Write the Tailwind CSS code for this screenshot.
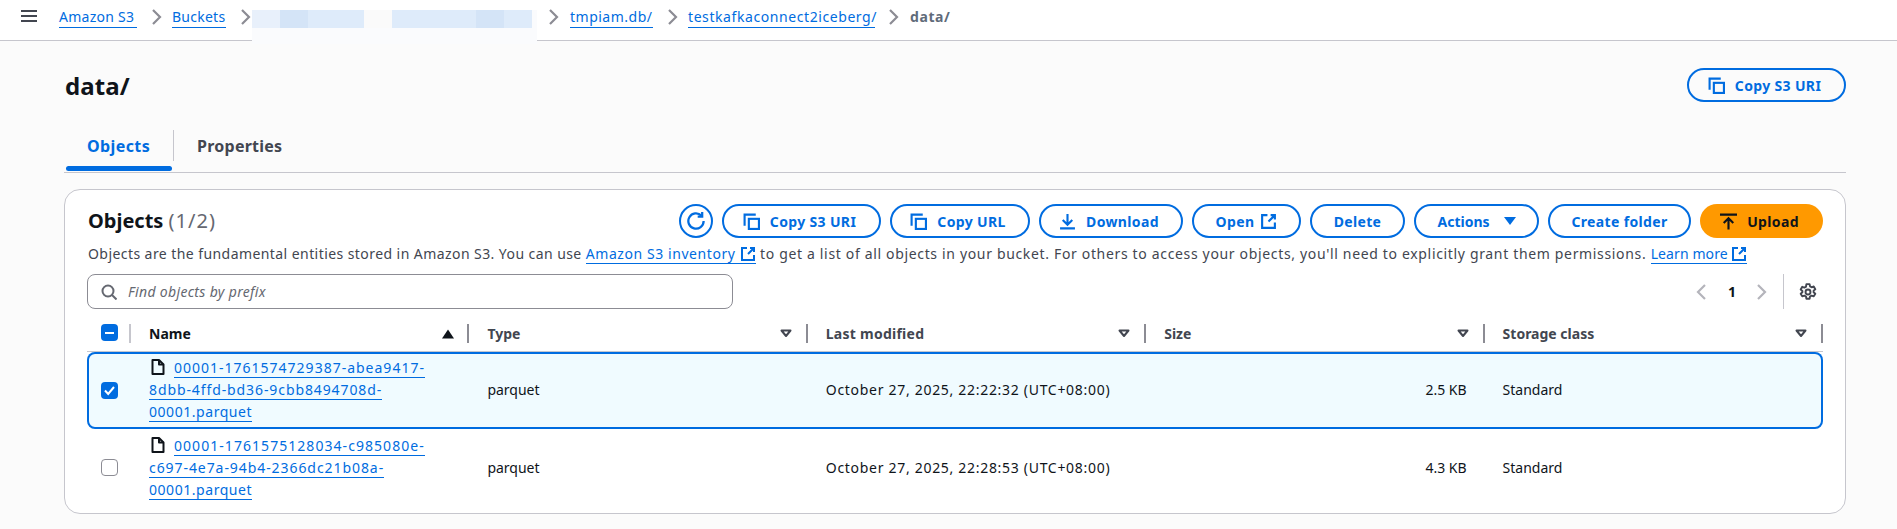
<!DOCTYPE html>
<html lang="en">
<head>
<meta charset="utf-8">
<script src="https://cdn.jsdelivr.net/npm/@tailwindcss/browser@4"></script>
</head>
<body class="bg-[#fbfbfb] font-['Noto_Sans',sans-serif] text-[14px] text-[#0f141a] relative h-[529px] overflow-hidden">
<svg width="0" height="0" class="absolute">
  <defs>
    <g id="copy" fill="none" stroke="currentColor" stroke-width="2"><path d="M1.500 12V1.500H12"/><rect x="5.500" y="5.500" width="9.500" height="9.500"/></g>
    <g id="ext" fill="none" stroke="currentColor" stroke-width="2"><path d="M7 2H2v12h12V9"/><path d="M10 2h4v4M14 2 8 8"/></g>
    <g id="filter" fill="none" stroke="currentColor" stroke-width="2" stroke-linejoin="round"><path d="M3.500 4.500h9L8 10z"/></g>
    <g id="file" fill="none" stroke="currentColor" stroke-width="2" stroke-linejoin="round"><path d="M9 1H2.500v14h11V5.500z"/><path d="M9 1v4.500h4.500"/></g>
    <g id="chev" fill="none" stroke="currentColor" stroke-width="2.200"><path d="M5 1 12 8 5 15"/></g>
  </defs>
</svg>

<!-- top breadcrumb bar -->
<header class="h-[41px] bg-white border-b border-[#c6c6cd] flex items-start pt-[7px] pl-[21px] text-[#006ce0] relative">
  <svg class="w-[16px] h-[14px] mt-[2px] text-[#424650]" viewBox="0 0 16 14" fill="none" stroke="currentColor" stroke-width="2"><path d="M0 2h16M0 7h16M0 12h16"/></svg>
  <a class="ml-[22px] w-[78px] h-[21px] leading-[19px] whitespace-nowrap border-b border-[#006ce0] tracking-[0.25px]">Amazon S3</a>
  <svg class="ml-[13px] mt-[2px] w-[14px] h-[16px] text-[#8c8c94]" viewBox="2 0 14 16"><use href="#chev"/></svg>
  <a class="ml-[8px] w-[54px] h-[21px] leading-[19px] whitespace-nowrap border-b border-[#006ce0] tracking-[0.25px]">Buckets</a>
  <svg class="ml-[13px] mt-[2px] w-[14px] h-[16px] text-[#8c8c94]" viewBox="2 0 14 16"><use href="#chev"/></svg>
  <div class="w-[295px] shrink-0"></div>
  <svg class="ml-[-1px] mt-[2px] w-[14px] h-[16px] text-[#8c8c94]" viewBox="2 0 14 16"><use href="#chev"/></svg>
  <a class="ml-[9px] w-[83px] h-[21px] leading-[19px] whitespace-nowrap border-b border-[#006ce0] tracking-[0.5px]">tmpiam.db/</a>
  <svg class="ml-[13px] mt-[2px] w-[14px] h-[16px] text-[#8c8c94]" viewBox="2 0 14 16"><use href="#chev"/></svg>
  <a class="ml-[8px] w-[187px] h-[21px] leading-[19px] whitespace-nowrap border-b border-[#006ce0] tracking-[0.58px]">testkafkaconnect2iceberg/</a>
  <svg class="ml-[12px] mt-[2px] w-[14px] h-[16px] text-[#8c8c94]" viewBox="2 0 14 16"><use href="#chev"/></svg>
  <span class="ml-[9px] font-bold leading-[19px] text-[#5f6b7a] tracking-[0.6px]">data/</span>
</header>

<!-- redaction patch lying over the bar and its border -->
<div class="absolute left-[252px] top-[10px] w-[285px] h-[34px] flex flex-col">
  <div class="h-[18px] flex">
    <div class="w-[28px] bg-[#e8f0fb]"></div><div class="w-[28px] bg-[#d4e4f7]"></div><div class="w-[56px] bg-[#deebfa]"></div><div class="w-[28px] bg-[#fafafa]"></div><div class="w-[84px] bg-[#deebfa]"></div><div class="w-[28px] bg-[#d4e4f7]"></div><div class="w-[28px] bg-[#deebfa]"></div><div class="w-[5px] bg-[#fafbfd]"></div>
  </div>
  <div class="h-[16px] bg-[#fafbfd]"></div>
</div>

<main class="pl-[64px] pr-[51px]">
  <!-- page heading -->
  <div class="h-[61px] flex items-start justify-between">
    <h1 class="mt-[23px] ml-[1px] text-[24px] leading-[44px] font-bold tracking-[0.1px]">data/</h1>
    <button class="mt-[27px] w-[159px] h-[34px] rounded-[20px] border-2 border-[#006ce0] text-[#006ce0] font-bold tracking-[0.35px] flex items-center justify-center gap-[10px] pr-[4px]">
      <svg class="w-[17px] h-[17px]" viewBox="0 0 16 16"><use href="#copy"/></svg>Copy S3 URI
    </button>
  </div>

  <!-- tabs -->
  <div class="mt-[28px] h-[43px] border-b border-[#c6c6cd] flex items-start pl-[2px] relative">
    <div class="w-[107px] h-[41px] flex flex-col">
      <span class="pl-[21px] h-[36px] text-[16px] leading-[32px] font-bold text-[#006ce0] tracking-[0.4px]">Objects</span>
      <div class="h-[5px] w-[106px] rounded-[3px] bg-[#006ce0]"></div>
    </div>
    <div class="w-px h-[31px] bg-[#c6c6cd]"></div>
    <span class="ml-[23px] text-[16px] leading-[32px] font-bold text-[#424650] tracking-[0.25px]">Properties</span>
  </div>

  <!-- card -->
  <section class="mt-[16px] h-[325px] bg-white border border-[#c6c6cd] rounded-[16px] px-[22px] pt-[14px]">
    <div class="flex items-center justify-between h-[34px]">
      <h2 class="ml-[1px] text-[20px] leading-[34px] font-bold">Objects <span class="font-normal text-[#656871] tracking-[1px]">(1/2)</span></h2>
      <div class="flex gap-[9px] text-[#006ce0] font-bold tracking-[0.35px]">
        <button class="w-[34px] h-[34px] rounded-full border-2 border-[#006ce0] flex items-center justify-center">
          <svg class="w-[18px] h-[18px]" viewBox="0 0 16 16" fill="none" stroke="currentColor" stroke-width="2"><path d="M14.800 8a6.800 6.800 0 1 1-2-4.800"/><path d="M13.500 0v4h-4"/></svg>
        </button>
        <button class="w-[159px] h-[34px] rounded-[20px] border-2 border-[#006ce0] flex items-center justify-center gap-[10px] pr-[4px]"><svg class="w-[17px] h-[17px]" viewBox="0 0 16 16"><use href="#copy"/></svg>Copy S3 URI</button>
        <button class="w-[140px] h-[34px] rounded-[20px] border-2 border-[#006ce0] flex items-center justify-center gap-[10px] pr-[4px]"><svg class="w-[17px] h-[17px]" viewBox="0 0 16 16"><use href="#copy"/></svg>Copy URL</button>
        <button class="w-[144px] h-[34px] rounded-[20px] border-2 border-[#006ce0] flex items-center justify-center gap-[10px] pr-[4px]"><svg class="w-[17px] h-[17px]" viewBox="0 0 16 16" fill="none" stroke="currentColor" stroke-width="2"><path d="M1 14.500h14M8 1v10M3.500 6.500 8 11l4.500-4.500"/></svg>Download</button>
        <button class="w-[109px] h-[34px] rounded-[20px] border-2 border-[#006ce0] flex items-center justify-center gap-[6px]">Open<svg class="w-[17px] h-[17px]" viewBox="0 0 16 16"><use href="#ext"/></svg></button>
        <button class="w-[95px] h-[34px] rounded-[20px] border-2 border-[#006ce0] flex items-center justify-center">Delete</button>
        <button class="w-[125px] h-[34px] rounded-[20px] border-2 border-[#006ce0] flex items-center justify-center gap-[12px] pl-[2px] tracking-normal">Actions<svg class="w-[16px] h-[16px]" viewBox="0 0 16 16" fill="currentColor"><path d="M2 4h12l-6 8z"/></svg></button>
        <button class="w-[143px] h-[34px] rounded-[20px] border-2 border-[#006ce0] flex items-center justify-center">Create folder</button>
        <button class="w-[123px] h-[34px] rounded-[20px] bg-[#ff9900] text-[#0f141a] flex items-center justify-center gap-[10px] pr-[4px]"><svg class="w-[17px] h-[17px]" viewBox="0 0 16 16" fill="none" stroke="currentColor" stroke-width="2"><path d="M0 1.500h16M8 15.500V5M3.500 9.500 8 5l4.500 4.500"/></svg>Upload</button>
      </div>
    </div>

    <p class="mt-[5px] ml-[1px] h-[22px] leading-[22px] whitespace-nowrap text-[#424650]"><span class="tracking-[0.43px]">Objects are the fundamental entities stored in Amazon S3. You can use </span><a class="text-[#006ce0] border-b border-[#006ce0] tracking-[0.57px]">Amazon S3 inventory <svg class="inline-block w-[16px] h-[16px] align-[-3px]" viewBox="0 0 16 16"><use href="#ext"/></svg></a><span class="tracking-[0.66px]"> to get a list of all objects in your bucket. For others to access your objects, you'll need to explicitly grant them permissions. </span><a class="text-[#006ce0] border-b border-[#006ce0] tracking-[0.1px]">Learn more <svg class="inline-block w-[16px] h-[16px] align-[-3px]" viewBox="0 0 16 16"><use href="#ext"/></svg></a></p>

    <div class="mt-[9px] h-[35px] flex items-start justify-between">
      <div class="w-[646px] h-[35px] rounded-[8px] border border-[#8c8c94] bg-white flex items-center pl-[13px] gap-[11px]">
        <svg class="w-[16px] h-[16px] text-[#656871]" viewBox="0 0 16 16" fill="none" stroke="currentColor" stroke-width="2"><circle cx="7" cy="7" r="5.500"/><path d="m11 11 4.500 4.500"/></svg>
        <span class="italic text-[#656871] tracking-[0.33px]">Find objects by prefix</span>
      </div>
      <div class="flex items-center h-[35px]">
        <svg class="w-[16px] h-[16px] text-[#b4b4bb] scale-x-[-1]" viewBox="0 0 16 16"><use href="#chev"/></svg>
        <span class="ml-[12px] w-[20px] text-center font-bold">1</span>
        <svg class="ml-[11px] w-[16px] h-[16px] text-[#b4b4bb]" viewBox="0 0 16 16"><use href="#chev"/></svg>
        <div class="ml-[14px] w-px h-[35px] bg-[#c6c6cd]"></div>
        <svg class="ml-[15px] mr-[6px] w-[18px] h-[18px] text-[#424650]" viewBox="0 0 16 16" fill="none" stroke="currentColor" stroke-width="1.700" stroke-linejoin="round"><path d="M6.600 1h2.800l.4 2 1.400.8 1.900-.7 1.400 2.400-1.500 1.300v1.400l1.500 1.300-1.400 2.400-1.900-.7-1.400.8-.4 2H6.600l-.4-2-1.400-.8-1.900.7-1.400-2.400 1.500-1.300V7.100L1.500 5.800l1.400-2.400 1.900.7 1.400-.8z"/><circle cx="8" cy="8" r="2.200"/></svg>
      </div>
    </div>

    <!-- table head -->
    <div class="mt-[15px] h-[28px] border-b border-[#c6c6cd] grid grid-cols-[44px_repeat(5,1fr)] items-start font-bold text-[#424650]">
      <div class="h-[19px] flex items-start pl-[14px] border-r-2 border-[#c6c6cd]">
        <div class="w-[17px] h-[17px] rounded-[4px] bg-[#006ce0] flex items-center justify-center"><div class="w-[9px] h-[2px] bg-white"></div></div>
      </div>
      <div class="h-[19px] flex items-center justify-between pl-[18px] pr-[13px] border-r-2 border-[#8c8c94] text-[#0f141a]"><span>Name</span><svg class="w-[12px] h-[10px]" viewBox="0 0 12 10" fill="currentColor"><path d="M0 9.500 6 .5l6 9z"/></svg></div>
      <div class="h-[19px] flex items-center justify-between pl-[18px] pr-[12px] border-r-2 border-[#8c8c94]"><span>Type</span><svg class="w-[16px] h-[16px]" viewBox="0 0 16 16"><use href="#filter"/></svg></div>
      <div class="h-[19px] flex items-center justify-between pl-[18px] pr-[12px] border-r-2 border-[#8c8c94]"><span class="tracking-[0.25px]">Last modified</span><svg class="w-[16px] h-[16px]" viewBox="0 0 16 16"><use href="#filter"/></svg></div>
      <div class="h-[19px] flex items-center justify-between pl-[18px] pr-[12px] border-r-2 border-[#8c8c94]"><span>Size</span><svg class="w-[16px] h-[16px]" viewBox="0 0 16 16"><use href="#filter"/></svg></div>
      <div class="h-[19px] flex items-center justify-between pl-[18px] pr-[12px] border-r-2 border-[#8c8c94]"><span>Storage class</span><svg class="w-[16px] h-[16px]" viewBox="0 0 16 16"><use href="#filter"/></svg></div>
    </div>

    <!-- selected row -->
    <div class="h-[77px] pb-[2px] grid grid-cols-[44px_repeat(5,1fr)] items-center bg-[#f0fbff] shadow-[inset_0_0_0_2px_#006ce0] rounded-[8px]">
      <div class="pl-[14px] pt-[2px]">
        <div class="w-[17px] h-[17px] rounded-[4px] bg-[#006ce0] flex items-center justify-center"><svg class="w-[11px] h-[11px]" viewBox="0 0 11 11" fill="none" stroke="#fff" stroke-width="2"><path d="M1 5.500 4.200 9 10 2"/></svg></div>
      </div>
      <div class="pl-[18px] leading-[22px] whitespace-nowrap text-[#006ce0]">
        <svg class="inline-block w-[16px] h-[16px] mr-[8px] ml-[1px] text-[#0f141a] align-[-2px]" viewBox="0 0 16 16"><use href="#file"/></svg><a class="border-b border-[#006ce0] tracking-[1px]">00001-1761574729387-abea9417-</a><br><a class="border-b border-[#006ce0] tracking-[0.9px]">8dbb-4ffd-bd36-9cbb8494708d-</a><br><a class="border-b border-[#006ce0] tracking-[0.55px]">00001.parquet</a>
      </div>
      <div class="pl-[18px]">parquet</div>
      <div class="pl-[18px] whitespace-nowrap tracking-[0.7px]">October 27, 2025, 22:22:32 (UTC+08:00)</div>
      <div class="pr-[18px] text-right">2.5 KB</div>
      <div class="pl-[18px]">Standard</div>
    </div>

    <!-- plain row -->
    <div class="h-[77px] grid grid-cols-[44px_repeat(5,1fr)] items-center">
      <div class="pl-[14px]">
        <div class="w-[17px] h-[17px] rounded-[4px] border border-[#8c8c94] bg-white"></div>
      </div>
      <div class="pl-[18px] leading-[22px] whitespace-nowrap text-[#006ce0]">
        <svg class="inline-block w-[16px] h-[16px] mr-[8px] ml-[1px] text-[#0f141a] align-[-2px]" viewBox="0 0 16 16"><use href="#file"/></svg><a class="border-b border-[#006ce0] tracking-[1.05px]">00001-1761575128034-c985080e-</a><br><a class="border-b border-[#006ce0] tracking-[0.93px]">c697-4e7a-94b4-2366dc21b08a-</a><br><a class="border-b border-[#006ce0] tracking-[0.55px]">00001.parquet</a>
      </div>
      <div class="pl-[18px]">parquet</div>
      <div class="pl-[18px] whitespace-nowrap tracking-[0.7px]">October 27, 2025, 22:28:53 (UTC+08:00)</div>
      <div class="pr-[18px] text-right">4.3 KB</div>
      <div class="pl-[18px]">Standard</div>
    </div>
  </section>
</main>
</body>
</html>
